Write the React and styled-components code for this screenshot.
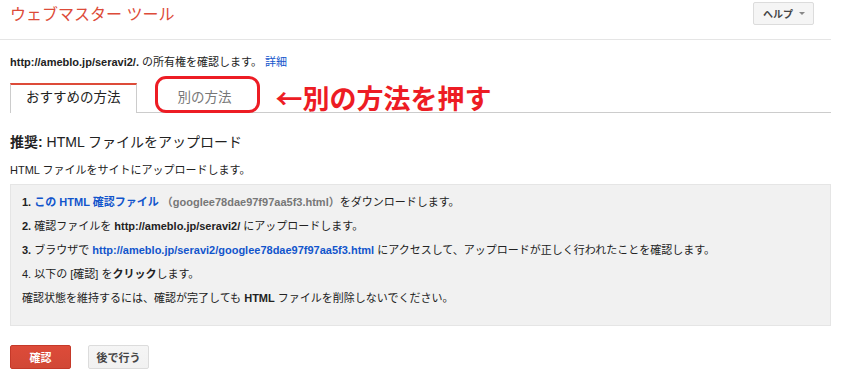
import React from 'react';
import styled, { createGlobalStyle } from 'styled-components';

const GlobalStyle = createGlobalStyle`
    body {
        margin: 0;
        background: #ffffff;
        font-family: Arial, 'Liberation Sans', 'Noto Sans CJK JP', sans-serif;
        color: #222;
    }
`

const Page = styled.div`
    padding-right: 17px;
`

const Header = styled.div`
    display: flex;
    justify-content: space-between;
    align-items: flex-start;
    height: 39px;
    padding: 0 17px 0 10px;
    border-bottom: 1px solid #e5e5e5;
`

const Title = styled.div`
    font-size: 16px;
    line-height: 30px;
    color: #dd4b39;
`

const HelpButton = styled.div`
    display: flex;
    align-items: center;
    justify-content: space-between;
    box-sizing: border-box;
    width: 61px;
    height: 23px;
    margin-top: 2px;
    padding: 0 8px 0 9px;
    background: #f5f5f5;
    border: 1px solid #dcdcdc;
    border-radius: 2px;
    font-size: 10px;
    font-weight: bold;
    color: #444;
`

const Caret = styled.span`
    width: 0;
    height: 0;
    border-left: 3px solid transparent;
    border-right: 3px solid transparent;
    border-top: 3px solid #888;
`

const Content = styled.div`
    padding-left: 10px;
`

const Ownership = styled.div`
    margin-top: 16px;
    font-size: 11px;
    line-height: 13px;
`

const Link = styled.a`
    color: #1155cc;
    text-decoration: none;
    font-weight: ${p => (p.$bold ? 'bold' : 'normal')};
`

const TabBar = styled.div`
    display: flex;
    align-items: flex-end;
    height: 29px;
    margin-top: 14px;
    border-bottom: 1px solid #ccc;
`

const Tab = styled.div`
    position: relative;
    box-sizing: border-box;
    height: ${p => (p.$active ? '30px' : '29px')};
    margin-bottom: ${p => (p.$active ? '-1px' : '0')};
    margin-left: ${p => (p.$active ? '0' : '21px')};
    padding: 0 ${p => (p.$active ? '15px' : '19px')};
    background: #fff;
    border-top: 2px solid ${p => (p.$active ? '#dd4b39' : 'transparent')};
    border-left: 1px solid ${p => (p.$active ? '#ccc' : 'transparent')};
    border-right: 1px solid ${p => (p.$active ? '#ccc' : 'transparent')};
    font-size: 13.5px;
    line-height: 26px;
    color: ${p => (p.$active ? '#222' : '#777')};
    white-space: nowrap;
`

const Ring = styled.span`
    position: absolute;
    top: -9px;
    left: -4px;
    right: -9px;
    bottom: -1px;
    border: 3.5px solid #ed1c24;
    border-radius: 11px;
`

const Note = styled.div`
    align-self: center;
    margin-left: 24px;
    font-family: 'Noto Sans CJK JP', sans-serif;
    font-size: 27px;
    font-weight: bold;
    line-height: 29px;
    color: #ed1c24;
    white-space: nowrap;
`

const Heading = styled.h2`
    margin: 19px 0 0;
    font-size: 14px;
    font-weight: normal;
    line-height: 20px;
    color: #222;

    b {
        font-weight: bold;
    }
`

const Lead = styled.div`
    margin-top: 11px;
    font-size: 11px;
    line-height: 14px;
`

const StepsBox = styled.div`
    margin-top: 7px;
    padding: 10px 11px 20px;
    background: #f1f1f1;
    border: 1px solid #e5e5e5;
`

const Step = styled.div`
    font-size: 11px;
    line-height: 14px;
    margin-top: ${p => (p.$first ? '0' : '10px')};
    white-space: nowrap;
`

const FileName = styled.span`
    color: #777;
    font-weight: bold;
`

const Actions = styled.div`
    display: flex;
    gap: 17px;
    margin-top: 19px;
`

const Button = styled.button`
    box-sizing: border-box;
    width: 61px;
    height: 24px;
    padding: 0;
    border-radius: 2px;
    border: 1px solid ${p => (p.$primary ? '#c53929' : '#dcdcdc')};
    background: ${p => (p.$primary ? 'linear-gradient(#dd4b39, #d14836)' : 'linear-gradient(#f5f5f5, #f1f1f1)')};
    color: ${p => (p.$primary ? '#fff' : '#444')};
    font-family: inherit;
    font-size: 11px;
    font-weight: bold;
`

const App = () => {
    return (
        <Page>
            <GlobalStyle />
            <Header>
                <Title>ウェブマスター ツール</Title>
                <HelpButton>
                    ヘルプ
                    <Caret />
                </HelpButton>
            </Header>
            <Content>
                <Ownership>
                    <b>http://ameblo.jp/seravi2/.</b> の所有権を確認します。 <Link href="#">詳細</Link>
                </Ownership>
                <TabBar>
                    <Tab $active>おすすめの方法</Tab>
                    <Tab>
                        別の方法
                        <Ring />
                    </Tab>
                    <Note>←別の方法を押す</Note>
                </TabBar>
                <Heading>
                    <b>推奨:</b> HTML ファイルをアップロード
                </Heading>
                <Lead>HTML ファイルをサイトにアップロードします。</Lead>
                <StepsBox>
                    <Step $first>
                        <b>1.</b> <Link href="#" $bold>この HTML 確認ファイル</Link>{' '}
                        <FileName>（googlee78dae97f97aa5f3.html）</FileName>をダウンロードします。
                    </Step>
                    <Step>
                        <b>2.</b> 確認ファイルを <b>http://ameblo.jp/seravi2/</b> にアップロードします。
                    </Step>
                    <Step>
                        <b>3.</b> ブラウザで <Link href="#" $bold>http://ameblo.jp/seravi2/googlee78dae97f97aa5f3.html</Link> にアクセスして、アップロードが正しく行われたことを確認します。
                    </Step>
                    <Step>
                        4. 以下の [確認] を<b>クリック</b>します。
                    </Step>
                    <Step>
                        確認状態を維持するには、確認が完了しても <b>HTML</b> ファイルを削除しないでください。
                    </Step>
                </StepsBox>
                <Actions>
                    <Button $primary>確認</Button>
                    <Button>後で行う</Button>
                </Actions>
            </Content>
        </Page>
    );
}

export default App;
